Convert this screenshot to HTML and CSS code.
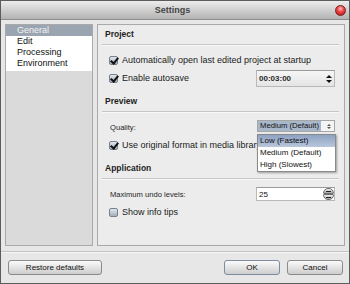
FILE: index.html
```html
<!DOCTYPE html>
<html lang="en">
<head>
    <meta charset="UTF-8">
    <title>Settings</title>
    <link rel="stylesheet" href="styles.css">
</head>
<body>
    <div class="window">
        <div class="titlebar">
            <span class="title">Settings</span>
            <span class="close-btn"></span>
        </div>

        <div class="content">
            <div class="nav">
                <ul class="nav-list">
                    <li class="active">General</li>
                    <li>Edit</li>
                    <li>Processing</li>
                    <li>Environment</li>
                </ul>
            </div>

            <div class="page">
                <div class="section">
                    <div class="section-title">Project</div>
                    <div class="rows">
                        <div class="row">
                            <label class="check"><span class="box checked"></span>Automatically open last edited project at startup</label>
                        </div>
                        <div class="row">
                            <label class="check"><span class="box checked"></span>Enable autosave</label>
                            <div class="spin time">
                                <span>00:03:00</span>
                                <span class="arrows"><i class="up"></i><i class="down"></i></span>
                            </div>
                        </div>
                    </div>
                </div>

                <div class="section">
                    <div class="section-title">Preview</div>
                    <div class="rows">
                        <div class="row">
                            <span class="label">Quality:</span>
                            <div class="combo">
                                <span class="combo-value">Medium (Default)</span>
                                <span class="arrows"><i class="up"></i><i class="down"></i></span>
                            </div>
                        </div>
                        <div class="row">
                            <label class="check"><span class="box checked"></span>Use original format in media library</label>
                        </div>
                    </div>
                </div>

                <div class="section">
                    <div class="section-title">Application</div>
                    <div class="rows">
                        <div class="row">
                            <span class="label">Maximum undo levels:</span>
                            <div class="spin undo">
                                <span>25</span>
                                <span class="round-btns"><i class="rb up"></i><i class="rb down"></i></span>
                            </div>
                        </div>
                        <div class="row">
                            <label class="check"><span class="box"></span>Show info tips</label>
                        </div>
                    </div>
                </div>

                <!-- open quality dropdown -->
                <ul class="dropdown">
                    <li class="hover">Low (Fastest)</li>
                    <li>Medium (Default)</li>
                    <li>High (Slowest)</li>
                </ul>
            </div>
        </div>

        <div class="separator"></div>

        <div class="footer">
            <button class="btn restore">Restore defaults</button>
            <div class="footer-right">
                <button class="btn ok">OK</button>
                <button class="btn">Cancel</button>
            </div>
        </div>
    </div>
</body>
</html>
```

FILE: styles.css
```css
* {
    margin: 0;
    padding: 0;
    box-sizing: border-box;
    font-family: 'Liberation Sans', Arial, sans-serif;
}

body {
    width: 350px;
    height: 284px;
    background-color: #e6e6e6;
}

.window {
    width: 350px;
    height: 284px;
    border: 1px solid #5c5c5c;
    background-color: #e7e7e7;
    display: flex;
    flex-direction: column;
}

.titlebar {
    height: 19px;
    display: flex;
    align-items: center;
    background: linear-gradient(#ececec, #cacaca 60%, #b3b3b3);
    border-bottom: 1px solid #8e8e8e;
    padding: 0 3px 0 0;
}

.title {
    flex: 1;
    text-align: center;
    font-size: 9px;
    font-weight: bold;
    color: #454545;
    padding-left: 9px;
}

.close-btn {
    width: 11px;
    height: 11px;
    border-radius: 50%;
    background: radial-gradient(circle at 50% 30%, #ffc4c4 0, #f04848 40%, #b01010 100%);
    border: 1px solid #7a2020;
}

.content {
    display: flex;
    gap: 4px;
    padding: 4px 4px 0 4px;
    height: 226px;
}

/* left navigation */
.nav {
    width: 88px;
    height: 222px;
    border: 1px solid #a9a9a9;
    background-color: #dadada;
}

.nav-list {
    list-style: none;
    background-color: #fff;
    padding-bottom: 2px;
}

.nav-list li {
    height: 11px;
    line-height: 11px;
    font-size: 9px;
    color: #111;
    padding-left: 11px;
}

.nav-list li.active {
    background-color: #9ba4b1;
    color: #f4f4f4;
}

/* right page */
.page {
    position: relative;
    width: 248px;
    height: 222px;
    border: 1px solid #a9a9a9;
    background-color: #ececec;
}

.section {
    margin: 0 5px 5px 4px;
}

.section-title {
    height: 20px;
    line-height: 19px;
    padding-left: 3px;
    font-size: 8.5px;
    font-weight: bold;
    color: #1e1e1e;
    border-bottom: 1px solid #c6c6c6;
    box-shadow: 0 1px 0 #f8f8f8;
}

.rows {
    padding-top: 6px;
}

.row {
    height: 18px;
    display: flex;
    align-items: center;
    justify-content: space-between;
    padding: 0 4px 0 7px;
}

.check {
    display: flex;
    align-items: center;
    gap: 4px;
    font-size: 9px;
    color: #1a1a1a;
    white-space: nowrap;
}

.label {
    font-size: 7.6px;
    color: #1e1e1e;
    padding-left: 1px;
}

.box {
    width: 9px;
    height: 9px;
    border: 1px solid #75818f;
    border-radius: 2px;
    background: linear-gradient(#e2e6ec, #a3aebc);
    position: relative;
}

.box.checked::after {
    content: "";
    position: absolute;
    left: 2px;
    top: -1px;
    width: 3px;
    height: 6px;
    border-right: 2px solid #111;
    border-bottom: 2px solid #111;
    transform: rotate(40deg);
}

/* inputs */
.spin {
    width: 79px;
    background-color: #fff;
    border: 1px solid #b9b9b9;
    border-top-color: #9a9a9a;
    display: flex;
    align-items: center;
    justify-content: space-between;
    font-size: 8px;
    color: #111;
    padding-left: 2px;
}

.spin.time {
    height: 17px;
    background: linear-gradient(#f6f6f6, #e4e4e4);
    margin-top: 1px;
    font-weight: bold;
    color: #2a2a2a;
}

.spin.undo {
    height: 14px;
}

.arrows {
    display: flex;
    flex-direction: column;
    gap: 2px;
    width: 10px;
    align-items: center;
}

.arrows i {
    width: 0;
    height: 0;
    border-left: 3px solid transparent;
    border-right: 3px solid transparent;
}

.arrows .up {
    border-bottom: 3px solid #111;
}

.arrows .down {
    border-top: 3px solid #111;
}

.round-btns {
    display: flex;
    flex-direction: column;
}

.rb {
    width: 11px;
    height: 6px;
    border: 1px solid #6f6f6f;
    background: linear-gradient(#f0f0f0, #a8a8a8);
    position: relative;
}

.rb.up {
    border-radius: 5px 5px 1px 1px;
}

.rb.down {
    border-radius: 1px 1px 5px 5px;
}

.rb::after {
    content: "";
    position: absolute;
    left: 2px;
    width: 5px;
    height: 1px;
    top: 2px;
    background-color: #222;
}

.combo {
    width: 78px;
    height: 12px;
    margin-top: -2px;
    border: 1px solid #a5a5a5;
    background-color: #f4f4f4;
    display: flex;
    align-items: center;
    justify-content: space-between;
}

.combo-value {
    height: 10px;
    line-height: 10px;
    padding: 0 2px;
    font-size: 7.7px;
    color: #111;
    background-color: #a9b7cb;
}

.combo .arrows {
    gap: 1px;
}

.combo .arrows i {
    border-left-width: 2px;
    border-right-width: 2px;
}

.combo .arrows .up {
    border-bottom: 2px solid #555;
}

.combo .arrows .down {
    border-top: 2px solid #555;
}

.dropdown {
    position: absolute;
    left: 159px;
    top: 109px;
    width: 79px;
    height: 38px;
    list-style: none;
    background-color: #fff;
    border: 1px solid #8a8a8a;
    box-shadow: 1px 1px 2px rgba(0, 0, 0, 0.35);
}

.dropdown li {
    height: 12px;
    line-height: 12px;
    padding-left: 2px;
    font-size: 8px;
    color: #111;
}

.dropdown li.hover {
    background: linear-gradient(#8ea2c3, #b9c6db);
}

/* footer */
.separator {
    margin-top: 5px;
    height: 2px;
    border-top: 1px solid #c3c3c3;
    border-bottom: 1px solid #f7f7f7;
}

.footer {
    display: flex;
    justify-content: space-between;
    padding: 7px 6px 0 7px;
}

.footer-right {
    display: flex;
    gap: 7px;
}

.btn {
    height: 15px;
    width: 56px;
    font-size: 8px;
    color: #111;
    border: 1px solid #8b8b8b;
    border-radius: 3px;
    background: linear-gradient(#fbfbfb, #e4e4e4 50%, #cdcdcd);
}

.btn.restore {
    width: 94px;
}

.btn.ok {
    border-color: #7e8ca0;
}
```
